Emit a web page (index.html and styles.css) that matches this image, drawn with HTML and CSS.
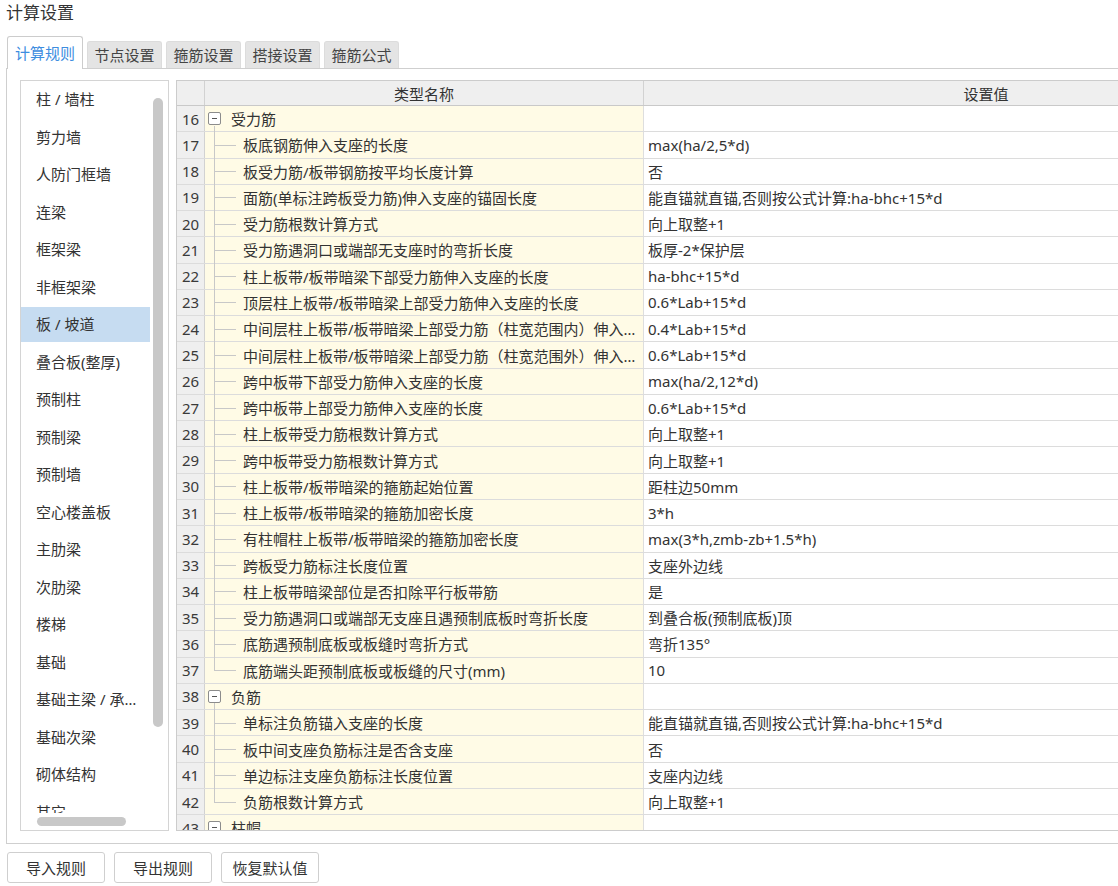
FILE: index.html
```html
<!DOCTYPE html>
<html lang="zh">
<head>
<meta charset="utf-8">
<title>计算设置</title>
<link rel="stylesheet" href="styles.css">
</head>
<body>
<div class="app">
  <div class="title">计算设置</div>
  <div class="tabs">
    <div class="tab active">计算规则</div>
    <div class="tab">节点设置</div>
    <div class="tab">箍筋设置</div>
    <div class="tab">搭接设置</div>
    <div class="tab">箍筋公式</div>
  </div>
  <div class="panel">
    <div class="sidebar">
      <ul class="cats">
        <li>柱 / 墙柱</li>
        <li>剪力墙</li>
        <li>人防门框墙</li>
        <li>连梁</li>
        <li>框架梁</li>
        <li>非框架梁</li>
        <li class="sel">板 / 坡道</li>
        <li>叠合板(整厚)</li>
        <li>预制柱</li>
        <li>预制梁</li>
        <li>预制墙</li>
        <li>空心楼盖板</li>
        <li>主肋梁</li>
        <li>次肋梁</li>
        <li>楼梯</li>
        <li>基础</li>
        <li>基础主梁 / 承台梁</li>
        <li>基础次梁</li>
        <li>砌体结构</li>
        <li>其它</li>
      </ul>
      <div class="vthumb"></div>
      <div class="hbar"><div class="hthumb"></div></div>
    </div>
    <div class="grid">
      <div class="row head">
        <div class="num"></div>
        <div class="name">类型名称</div>
        <div class="val">设置值</div>
      </div>
      <div class="row group"><div class="num">16</div><div class="name"><span class="box"></span><span class="txt">受力筋</span></div><div class="val"></div></div>
      <div class="row child"><div class="num">17</div><div class="name"><span class="txt">板底钢筋伸入支座的长度</span></div><div class="val">max(ha/2,5*d)</div></div>
      <div class="row child"><div class="num">18</div><div class="name"><span class="txt">板受力筋/板带钢筋按平均长度计算</span></div><div class="val">否</div></div>
      <div class="row child"><div class="num">19</div><div class="name"><span class="txt">面筋(单标注跨板受力筋)伸入支座的锚固长度</span></div><div class="val">能直锚就直锚,否则按公式计算:ha-bhc+15*d</div></div>
      <div class="row child"><div class="num">20</div><div class="name"><span class="txt">受力筋根数计算方式</span></div><div class="val">向上取整+1</div></div>
      <div class="row child"><div class="num">21</div><div class="name"><span class="txt">受力筋遇洞口或端部无支座时的弯折长度</span></div><div class="val">板厚-2*保护层</div></div>
      <div class="row child"><div class="num">22</div><div class="name"><span class="txt">柱上板带/板带暗梁下部受力筋伸入支座的长度</span></div><div class="val">ha-bhc+15*d</div></div>
      <div class="row child"><div class="num">23</div><div class="name"><span class="txt">顶层柱上板带/板带暗梁上部受力筋伸入支座的长度</span></div><div class="val">0.6*Lab+15*d</div></div>
      <div class="row child"><div class="num">24</div><div class="name"><span class="txt">中间层柱上板带/板带暗梁上部受力筋（柱宽范围内）伸入支座的长度</span></div><div class="val">0.4*Lab+15*d</div></div>
      <div class="row child"><div class="num">25</div><div class="name"><span class="txt">中间层柱上板带/板带暗梁上部受力筋（柱宽范围外）伸入支座的长度</span></div><div class="val">0.6*Lab+15*d</div></div>
      <div class="row child"><div class="num">26</div><div class="name"><span class="txt">跨中板带下部受力筋伸入支座的长度</span></div><div class="val">max(ha/2,12*d)</div></div>
      <div class="row child"><div class="num">27</div><div class="name"><span class="txt">跨中板带上部受力筋伸入支座的长度</span></div><div class="val">0.6*Lab+15*d</div></div>
      <div class="row child"><div class="num">28</div><div class="name"><span class="txt">柱上板带受力筋根数计算方式</span></div><div class="val">向上取整+1</div></div>
      <div class="row child"><div class="num">29</div><div class="name"><span class="txt">跨中板带受力筋根数计算方式</span></div><div class="val">向上取整+1</div></div>
      <div class="row child"><div class="num">30</div><div class="name"><span class="txt">柱上板带/板带暗梁的箍筋起始位置</span></div><div class="val">距柱边50mm</div></div>
      <div class="row child"><div class="num">31</div><div class="name"><span class="txt">柱上板带/板带暗梁的箍筋加密长度</span></div><div class="val">3*h</div></div>
      <div class="row child"><div class="num">32</div><div class="name"><span class="txt">有柱帽柱上板带/板带暗梁的箍筋加密长度</span></div><div class="val">max(3*h,zmb-zb+1.5*h)</div></div>
      <div class="row child"><div class="num">33</div><div class="name"><span class="txt">跨板受力筋标注长度位置</span></div><div class="val">支座外边线</div></div>
      <div class="row child"><div class="num">34</div><div class="name"><span class="txt">柱上板带暗梁部位是否扣除平行板带筋</span></div><div class="val">是</div></div>
      <div class="row child"><div class="num">35</div><div class="name"><span class="txt">受力筋遇洞口或端部无支座且遇预制底板时弯折长度</span></div><div class="val">到叠合板(预制底板)顶</div></div>
      <div class="row child"><div class="num">36</div><div class="name"><span class="txt">底筋遇预制底板或板缝时弯折方式</span></div><div class="val">弯折135°</div></div>
      <div class="row child last"><div class="num">37</div><div class="name"><span class="txt">底筋端头距预制底板或板缝的尺寸(mm)</span></div><div class="val">10</div></div>
      <div class="row group"><div class="num">38</div><div class="name"><span class="box"></span><span class="txt">负筋</span></div><div class="val"></div></div>
      <div class="row child"><div class="num">39</div><div class="name"><span class="txt">单标注负筋锚入支座的长度</span></div><div class="val">能直锚就直锚,否则按公式计算:ha-bhc+15*d</div></div>
      <div class="row child"><div class="num">40</div><div class="name"><span class="txt">板中间支座负筋标注是否含支座</span></div><div class="val">否</div></div>
      <div class="row child"><div class="num">41</div><div class="name"><span class="txt">单边标注支座负筋标注长度位置</span></div><div class="val">支座内边线</div></div>
      <div class="row child last"><div class="num">42</div><div class="name"><span class="txt">负筋根数计算方式</span></div><div class="val">向上取整+1</div></div>
      <div class="row group"><div class="num">43</div><div class="name"><span class="box"></span><span class="txt">柱帽</span></div><div class="val"></div></div>
    </div>
  </div>
  <div class="buttons">
    <button class="btn">导入规则</button>
    <button class="btn">导出规则</button>
    <button class="btn">恢复默认值</button>
  </div>
</div>
</body>
</html>
```

FILE: styles.css
```css
html, body {
  margin: 0;
  padding: 0;
  overflow: hidden;
  background: #ffffff;
}

body {
  font-family: "Noto Sans", "Noto Sans CJK SC", sans-serif;
  font-size: 15px;
  color: #333333;
}

.app {
  width: 1400px;
}

.title {
  height: 36px;
  line-height: 25px;
  font-size: 17px;
  padding-left: 6px;
  color: #333333;
}

.tabs {
  display: flex;
  align-items: flex-start;
  gap: 4px;
  padding-left: 7px;
  height: 33px;
  position: relative;
  z-index: 1;
}

.tab {
  box-sizing: border-box;
  width: 75px;
  height: 27px;
  margin-top: 5px;
  line-height: 26px;
  text-align: center;
  background: #e4e4e4;
  border: 1px solid #dcdcdc;
  border-bottom: none;
  border-radius: 3px 3px 0 0;
  color: #444444;
  font-size: 15px;
}

.tab.active {
  width: 76px;
  height: 33px;
  margin-top: 0;
  line-height: 32px;
  background: #ffffff;
  border-color: #cccccc;
  color: #3d8ddf;
}

.panel {
  margin-top: -1px;
  margin-left: 6px;
  box-sizing: border-box;
  height: 776px;
  border: 1px solid #cfcfcf;
  padding: 11px 0 0 13px;
  display: flex;
  gap: 7px;
}

.sidebar {
  box-sizing: border-box;
  width: 149px;
  height: 751px;
  border: 1px solid #d4d4d4;
  display: flex;
  flex-direction: column;
  position: relative;
}

.cats {
  list-style: none;
  margin: 0;
  padding: 1px 0 0 0;
  height: 732px;
  box-sizing: border-box;
  overflow: hidden;
}

.cats li {
  width: 129px;
  height: 35px;
  line-height: 35px;
  margin-bottom: 2.5px;
  padding: 0 0 0 15px;
  box-sizing: border-box;
  white-space: nowrap;
  overflow: hidden;
  text-overflow: ellipsis;
  color: #333333;
}

.cats li.sel {
  background: #c6dcf1;
}

.vthumb {
  position: absolute;
  left: 132px;
  top: 17px;
  width: 10px;
  height: 629px;
  border-radius: 5px;
  background: #c8c8c8;
}

.hbar {
  height: 17px;
}

.hthumb {
  margin: 4px 0 0 16px;
  width: 89px;
  height: 9px;
  border-radius: 5px;
  background: #c8c8c8;
}

.grid {
  box-sizing: border-box;
  width: 1160px;
  height: 751px;
  border: 1px solid #cccccc;
  overflow: hidden;
}

.row {
  display: grid;
  grid-template-columns: 28px 439px 684px;
  box-sizing: border-box;
  height: 26.27px;
  border-bottom: 1px solid #dcdcdc;
}

.row.head {
  height: 25px;
  background: #efefef;
  border-bottom: 1px solid #c9c9c9;
}

.num {
  box-sizing: border-box;
  background: #efefef;
  border-right: 1px solid #d2d2d2;
  text-align: center;
  display: flex;
  align-items: center;
  justify-content: center;
  color: #3a3a3a;
  font-size: 15px;
}

.name {
  box-sizing: border-box;
  background: #fffbe6;
  border-right: 1px solid #dedede;
  display: flex;
  align-items: center;
  padding: 0 4px 0 38px;
  position: relative;
  min-width: 0;
}

.val {
  display: flex;
  align-items: center;
  padding-left: 4px;
  white-space: nowrap;
  color: #333333;
}

.head .name {
  background: #efefef;
  justify-content: center;
  padding: 0;
  border-right: 1px solid #d2d2d2;
}

.head .val {
  justify-content: center;
  padding: 0;
}

.txt {
  flex: 1;
  min-width: 0;
  white-space: nowrap;
  overflow: hidden;
  text-overflow: ellipsis;
}

.group .name {
  padding-left: 3px;
}

.box {
  box-sizing: border-box;
  width: 13px;
  height: 13px;
  border: 1px solid #8c8c8c;
  border-radius: 2px;
  background: #ffffff;
  margin-right: 10px;
  flex: none;
  display: flex;
  align-items: center;
  justify-content: center;
}

.box::before {
  content: "";
  width: 5px;
  height: 1px;
  background: #555555;
}

.group .name::after {
  content: "";
  position: absolute;
  left: 9px;
  top: calc(50% + 7px);
  bottom: -1px;
  width: 1px;
  background: #c8c8c8;
}

.child .name::before {
  content: "";
  position: absolute;
  left: 9px;
  top: -1px;
  bottom: -1px;
  width: 1px;
  background: #c8c8c8;
}

.child.last .name::before {
  bottom: 50%;
}

.child .name::after {
  content: "";
  position: absolute;
  left: 9px;
  top: 50%;
  width: 22px;
  height: 1px;
  background: #c8c8c8;
}

.buttons {
  display: flex;
  gap: 9px;
  padding-left: 7px;
  margin-top: 8px;
}

.btn {
  box-sizing: border-box;
  width: 98px;
  height: 31px;
  background: #ffffff;
  border: 1px solid #cfcfcf;
  border-radius: 3px;
  font-family: "Noto Sans", "Noto Sans CJK SC", sans-serif;
  font-size: 15px;
  color: #333333;
  padding: 0;
}
```
